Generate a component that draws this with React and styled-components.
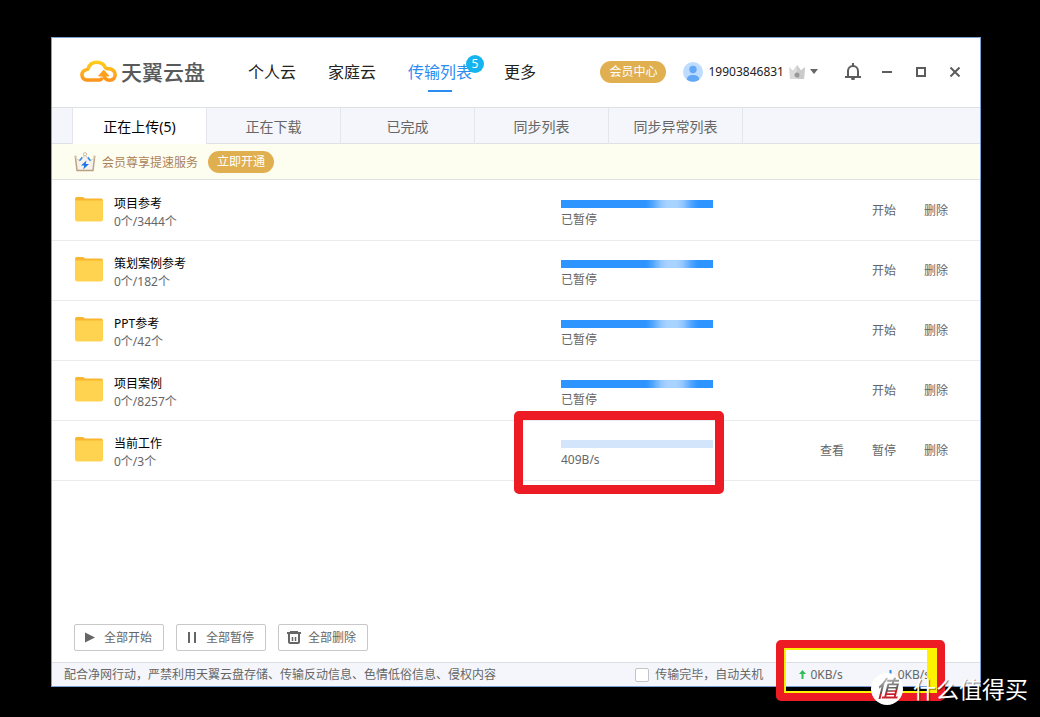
import React from 'react';
import styled, { createGlobalStyle } from 'styled-components';

const GlobalStyle = createGlobalStyle`
  *, *::before, *::after { box-sizing: border-box; }
  body {
    margin: 0;
    background: #000;
    font-family: "Noto Sans", "Noto Sans CJK SC", sans-serif;
    font-size: 12px;
    line-height: 18px;
    color: #666;
  }
  button { font: inherit; color: inherit; border: 0; background: none; padding: 0; cursor: pointer; }
  a { color: inherit; text-decoration: none; }
  ul { list-style: none; margin: 0; padding: 0; }
  svg { display: block; flex: none; }
`;

const Desktop = styled.div`
  position: relative;
  min-height: 100vh;
  display: flex;
  padding: 37px 59px 30px 51px;
  overflow: hidden;
`;

const Window = styled.main`
  flex: 1;
  min-width: 0;
  display: flex;
  flex-direction: column;
  background: #fff;
  border: 1px solid #7ba0d8;
`;

const Header = styled.header`
  display: flex;
  align-items: center;
  height: 70px;
  padding: 0 17px 2px 27px;
  border-bottom: 1px solid #dce1e6;
`;

const Brand = styled.a`
  display: flex;
  align-items: center;
  gap: 3px;
  font-size: 21px;
  line-height: 24px;
  font-weight: 500;
  color: #58595b;
`;

const Nav = styled.nav`
  display: flex;
  gap: 32px;
  margin-left: 43px;
`;

const NavLink = styled.a`
  position: relative;
  font-size: 16px;
  line-height: 24px;
  padding: 8px 0;
  white-space: nowrap;
  color: ${(p) => (p.$active ? '#2b8cf0' : '#222')};
  &::after {
    content: "";
    display: ${(p) => (p.$active ? 'block' : 'none')};
    position: absolute;
    left: 50%;
    bottom: 0;
    width: 24px;
    height: 2px;
    margin-left: -12px;
    background: #2b8cf0;
  }
`;

const Badge = styled.span`
  position: absolute;
  top: 3px;
  right: -12px;
  width: 18px;
  height: 18px;
  border-radius: 50%;
  background: #14b4f0;
  color: #fff;
  font-size: 12px;
  line-height: 18px;
  text-align: center;
`;

const Account = styled.div`
  display: flex;
  align-items: center;
  margin-left: auto;
`;

const Pill = styled.button`
  width: 66px;
  height: 22px;
  border-radius: 11px;
  background: #e0b050;
  color: #fff;
  line-height: 22px;
  white-space: nowrap;
`;

const UserButton = styled.button`
  display: flex;
  align-items: center;
  gap: 5px;
  margin-left: 17px;
  color: #222;
`;

const WindowControls = styled.div`
  display: flex;
  gap: 18px;
  margin-left: 27px;
`;

const ControlButton = styled.button`
  width: 16px;
  height: 18px;
  display: grid;
  place-items: center;
  color: #5c5c5c;
`;

const Tabs = styled.div`
  display: flex;
  height: 36px;
  padding-left: 20px;
  background: linear-gradient(#dce1e6, #dce1e6) bottom / 100% 1px no-repeat #f4f6fb;
`;

const Tab = styled.button`
  flex: 0 0 134px;
  font-size: 14px;
  line-height: 36px;
  padding-top: 1px;
  border-right: 1px solid #e3e6ef;
  color: ${(p) => (p.$active ? '#000' : '#666')};
  background: ${(p) => (p.$active ? '#fff' : 'transparent')};
  &:first-child { flex-basis: 135px; border-left: 1px solid #e3e6ef; }
`;

const Promo = styled.section`
  display: flex;
  align-items: center;
  height: 36px;
  padding-left: 22px;
  background: #fefef0;
  border-bottom: 1px solid #dfe3e0;
`;

const PromoText = styled.span`
  padding-top: 2px;
  margin: 0 10px 0 6px;
  color: #ab8158;
`;

const TaskList = styled.ul`
  flex: 1;
  padding-top: 1px;
`;

const TaskRow = styled.li`
  display: grid;
  grid-template-columns: 28px 1fr 152px 235px;
  height: 60px;
  padding: 0 32px 0 23px;
  border-bottom: 1px solid #e9ebef;
`;

const FolderCell = styled.div`
  padding-top: 16px;
`;

const TaskInfo = styled.div`
  padding: 14px 0 0 11px;
`;

const TaskName = styled.div`
  color: #000;
`;

const TaskStatus = styled.div`
  padding-top: 19px;
`;

const Bar = styled.div`
  height: 8px;
  margin-bottom: 3px;
  background: ${(p) =>
    p.$running
      ? '#d2e5fb'
      : 'linear-gradient(90deg, #2e94ff 56%, #4da4ff 60%, #93c7ff 66%, #a9d3ff 70%, #a9d3ff 76%, #93c7ff 80%, #4da4ff 86%, #2e94ff 90%)'};
`;

const RowActions = styled.div`
  display: flex;
  align-items: center;
  justify-content: flex-end;
  gap: 28px;
`;

const BulkActions = styled.div`
  display: flex;
  gap: 12px;
  padding: 0 22px 11px;
`;

const BulkButton = styled.button`
  display: flex;
  align-items: center;
  gap: 6px;
  width: 90px;
  height: 27px;
  padding-left: 7px;
  border: 1px solid #c8c8c8;
  border-radius: 2px;
  white-space: nowrap;
`;

const StatusBar = styled.footer`
  display: flex;
  align-items: center;
  height: 24px;
  padding: 0 50px 0 12px;
  background: #f4f6fb;
  border-top: 1px solid #dcdfe5;
  white-space: nowrap;
`;

const ShutdownOption = styled.label`
  display: flex;
  align-items: center;
  gap: 6px;
  margin-left: auto;
`;

const CheckBox = styled.input`
  appearance: none;
  width: 14px;
  height: 14px;
  margin: 0;
  background: #fff;
  border: 1px solid #c4c4c4;
  border-radius: 2px;
`;

const Speed = styled.span`
  display: flex;
  align-items: center;
  gap: 4px;
  margin-left: ${(p) => (p.$down ? '44px' : '36px')};
`;

const Highlight = styled.div`
  position: absolute;
  border: 9px solid #ed1c24;
  border-radius: 5px;
  pointer-events: none;
`;

const ProgressHighlight = styled(Highlight)`
  left: 514px;
  top: 411px;
  width: 210px;
  height: 83px;
`;

const SpeedHighlight = styled(Highlight)`
  left: 776px;
  top: 640px;
  width: 169px;
  height: 61px;
  &::before {
    content: "";
    position: absolute;
    inset: -1px;
    border: 2px solid #fff200;
    border-right-width: 10px;
  }
`;

const Watermark = styled.div`
  position: absolute;
  right: 12px;
  bottom: 12px;
  display: flex;
  align-items: center;
  gap: 10px;
  font-size: 23px;
  line-height: 32px;
  color: #fff;
  text-shadow: 1px 1px 1px rgba(0, 0, 0, 0.5);
`;

const Seal = styled.span`
  width: 32px;
  height: 32px;
  border-radius: 50%;
  background: #fff;
  text-align: center;
  font-size: 23px;
  line-height: 30px;
  font-weight: 500;
  font-style: italic;
  text-shadow: none;
`;

const SealGlyph = styled.span`
  background: linear-gradient(165deg, #bbb 25%, #555 58%, #c8202a 62%);
  background-clip: text;
  color: transparent;
`;

const CloudLogo = () => (
  <svg width="39" height="24" viewBox="0 0 39 24" fill="none">
    <defs>
      <linearGradient id="cloud" x1="0" y1="0" x2="0" y2="24" gradientUnits="userSpaceOnUse">
        <stop offset="0" stopColor="#ffd21c" />
        <stop offset="1" stopColor="#ff8a1c" />
      </linearGradient>
    </defs>
    <path
      d="M22.500 19.200Q21.500 20 20 20H7.800A5.200 5.200 0 0 1 7.200 9.700C8.300 9.600 8.800 9.400 9.200 8.300C10.500 4.400 13.600 2.200 17.800 2.200C21.600 2.200 24.800 4.200 26.200 7.400C26.600 8.300 27.200 8.600 28.500 8.600C33 8.500 36.200 11 36.200 14.600C36.200 18 33.800 20.200 30.800 20.200C27.300 20.200 25 18 25 14.500"
      stroke="url(#cloud)"
      strokeWidth="3.600"
      strokeLinecap="round"
      strokeLinejoin="round"
    />
    <path d="M24.800 10.200L30 16H19.600Z" fill="#ffa01c" stroke="#ffa01c" strokeLinejoin="round" />
  </svg>
);

const AvatarIcon = () => (
  <svg width="20" height="20" viewBox="0 0 20 20">
    <circle cx="10" cy="10" r="10" fill="#bddcff" />
    <circle cx="10" cy="7.500" r="3.700" fill="#62a8f5" />
    <path d="M3.800 17.800C3.800 14.500 6 13 10 13S16.200 14.500 16.200 17.800C12.800 20.400 7.200 20.400 3.800 17.800Z" fill="#62a8f5" />
  </svg>
);

const GreyCrown = () => (
  <svg width="16" height="14" viewBox="0 0 16 14">
    <path d="M0 2L4 5.500L8 0L12 5.500L16 2L15 14H1Z" fill="#dadada" />
    <path d="M8 0L12 5.500L16 2L15 14H8Z" fill="#cbcbcb" />
    <circle cx="8" cy="10" r="2.500" fill="#999" />
  </svg>
);

const Caret = () => (
  <svg width="8" height="5" viewBox="0 0 8 5">
    <path d="M0 0H8L4 5Z" fill="#666" />
  </svg>
);

const BellIcon = () => (
  <svg width="16" height="17" viewBox="0 0 16 17" fill="none" stroke="currentColor" strokeWidth="2">
    <path d="M3 13.500V8A5 5 0 0 1 13 8V13.500M0 14H16M8 0V3" />
    <path d="M6 14.500H10L9.500 17H6.500Z" fill="currentColor" stroke="none" />
  </svg>
);

const MinimizeIcon = () => (
  <svg width="10" height="2" viewBox="0 0 10 2"><path d="M0 0H10V2H0Z" fill="currentColor" /></svg>
);

const MaximizeIcon = () => (
  <svg width="10" height="10" viewBox="0 0 10 10"><path d="M1 1H9V9H1Z" fill="none" stroke="currentColor" strokeWidth="2" /></svg>
);

const CloseIcon = () => (
  <svg width="10" height="10" viewBox="0 0 10 10"><path d="M.5 .5L9.500 9.500M9.500 .5L.5 9.500" stroke="currentColor" strokeWidth="2" /></svg>
);

const VipCrown = () => (
  <svg width="22" height="20" viewBox="0 0 22 20">
    <path d="M1.500 6L6 9L11 3L16 9L20.500 6L19 18.500H3Z" fill="#f6f1ea" />
    <path d="M1.500 6L3 18.500H19L20.500 6" fill="none" stroke="#b9a080" strokeWidth="1.400" />
    <path d="M1.500 6L6 9L11 3L16 9L20.500 6" fill="none" stroke="#dccfbd" strokeWidth="1" />
    <path d="M4.800 8.200L8 4.600L8.500 6.200L6.200 9ZM17.200 8.200L14 4.600L13.500 6.200L15.800 9Z" fill="#2f8cf2" />
    <path d="M12.500 8.500L7 13.500H10.300L9.200 17.500L15 12H11.700Z" fill="#1672ee" />
    <circle cx="11" cy="2.200" r="1.600" fill="#fff" stroke="#b9a080" strokeWidth=".7" />
    <circle cx="1.500" cy="4.800" r="1.300" fill="#d3c0a4" />
    <circle cx="20.500" cy="4.800" r="1.300" fill="#d3c0a4" />
  </svg>
);

const FolderIcon = () => (
  <svg width="28" height="25" viewBox="0 0 28 25">
    <path d="M0 2Q0 0 2 0H8L10 1.500H26Q28 1.500 28 3.500V6H0Z" fill="#fab52e" />
    <path d="M0 3.500H28V22.500Q28 24.500 26 24.500H2Q0 24.500 0 22.500Z" fill="#ffd34f" />
  </svg>
);

const PlayIcon = () => (
  <svg width="16" height="14" viewBox="0 0 16 14"><path d="M3 1.500L13 6.500L3 11.500Z" fill="currentColor" /></svg>
);

const PauseIcon = () => (
  <svg width="16" height="14" viewBox="0 0 16 14"><path d="M4 1H6V12H4ZM10 1H12V12H10Z" fill="currentColor" /></svg>
);

const TrashIcon = () => (
  <svg width="16" height="14" viewBox="0 0 16 14">
    <path d="M4 0H12V1H15V3H1V1H4Z" fill="currentColor" />
    <path d="M3 3V11Q3 12 4 12H12Q13 12 13 11V3" fill="none" stroke="currentColor" strokeWidth="2" />
    <path d="M6.500 6V10M9.500 6V10" stroke="currentColor" strokeWidth="1.500" />
  </svg>
);

const ArrowIcon = ({ down }) => (
  <svg width="7" height="9" viewBox="0 0 7 9">
    <path
      d={down ? 'M2.500 0H4.500V5H7L3.500 9L0 5H2.500Z' : 'M3.500 0L7 4H4.500V9H2.500V4H0Z'}
      fill={down ? '#2b8cf0' : '#2dbd58'}
    />
  </svg>
);

const navItems = [
  { label: '个人云' },
  { label: '家庭云' },
  { label: '传输列表', badge: 5 },
  { label: '更多' },
];

const tabs = ['正在上传(5)', '正在下载', '已完成', '同步列表', '同步异常列表'];

const tasks = [
  { name: '项目参考', count: '0个/3444个', status: '已暂停' },
  { name: '策划案例参考', count: '0个/182个', status: '已暂停' },
  { name: 'PPT参考', count: '0个/42个', status: '已暂停' },
  { name: '项目案例', count: '0个/8257个', status: '已暂停' },
  { name: '当前工作', count: '0个/3个', status: '409B/s', running: true },
];

const bulkActions = [
  { label: '全部开始', Icon: PlayIcon },
  { label: '全部暂停', Icon: PauseIcon },
  { label: '全部删除', Icon: TrashIcon },
];

const controls = [
  { label: '通知', Icon: BellIcon },
  { label: '最小化', Icon: MinimizeIcon },
  { label: '最大化', Icon: MaximizeIcon },
  { label: '关闭', Icon: CloseIcon },
];

export default function App() {
  return (
    <Desktop>
      <GlobalStyle />
      <Window>
        <Header>
          <Brand href="#"><CloudLogo />天翼云盘</Brand>
          <Nav>
            {navItems.map(({ label, badge }) => (
              <NavLink key={label} href="#" $active={Boolean(badge)}>
                {label}
                {badge && <Badge>{badge}</Badge>}
              </NavLink>
            ))}
          </Nav>
          <Account>
            <Pill>会员中心</Pill>
            <UserButton><AvatarIcon />19903846831<GreyCrown /><Caret /></UserButton>
            <WindowControls>
              {controls.map(({ label, Icon }) => (
                <ControlButton key={label} aria-label={label}><Icon /></ControlButton>
              ))}
            </WindowControls>
          </Account>
        </Header>
        <Tabs role="tablist">
          {tabs.map((label, i) => (
            <Tab key={label} role="tab" aria-selected={i === 0} $active={i === 0}>{label}</Tab>
          ))}
        </Tabs>
        <Promo>
          <VipCrown />
          <PromoText>会员尊享提速服务</PromoText>
          <Pill>立即开通</Pill>
        </Promo>
        <TaskList>
          {tasks.map(({ name, count, status, running }) => (
            <TaskRow key={name}>
              <FolderCell><FolderIcon /></FolderCell>
              <TaskInfo>
                <TaskName>{name}</TaskName>
                <div>{count}</div>
              </TaskInfo>
              <TaskStatus>
                <Bar $running={running} />
                {status}
              </TaskStatus>
              <RowActions>
                {running && <button>查看</button>}
                <button>{running ? '暂停' : '开始'}</button>
                <button>删除</button>
              </RowActions>
            </TaskRow>
          ))}
        </TaskList>
        <BulkActions>
          {bulkActions.map(({ label, Icon }) => (
            <BulkButton key={label}><Icon />{label}</BulkButton>
          ))}
        </BulkActions>
        <StatusBar>
          <span>配合净网行动，严禁利用天翼云盘存储、传输反动信息、色情低俗信息、侵权内容</span>
          <ShutdownOption><CheckBox type="checkbox" />传输完毕，自动关机</ShutdownOption>
          <Speed><ArrowIcon />0KB/s</Speed>
          <Speed $down><ArrowIcon down />0KB/s</Speed>
        </StatusBar>
      </Window>
      <ProgressHighlight />
      <SpeedHighlight />
      <Watermark><Seal><SealGlyph>值</SealGlyph></Seal>什么值得买</Watermark>
    </Desktop>
  );
}
